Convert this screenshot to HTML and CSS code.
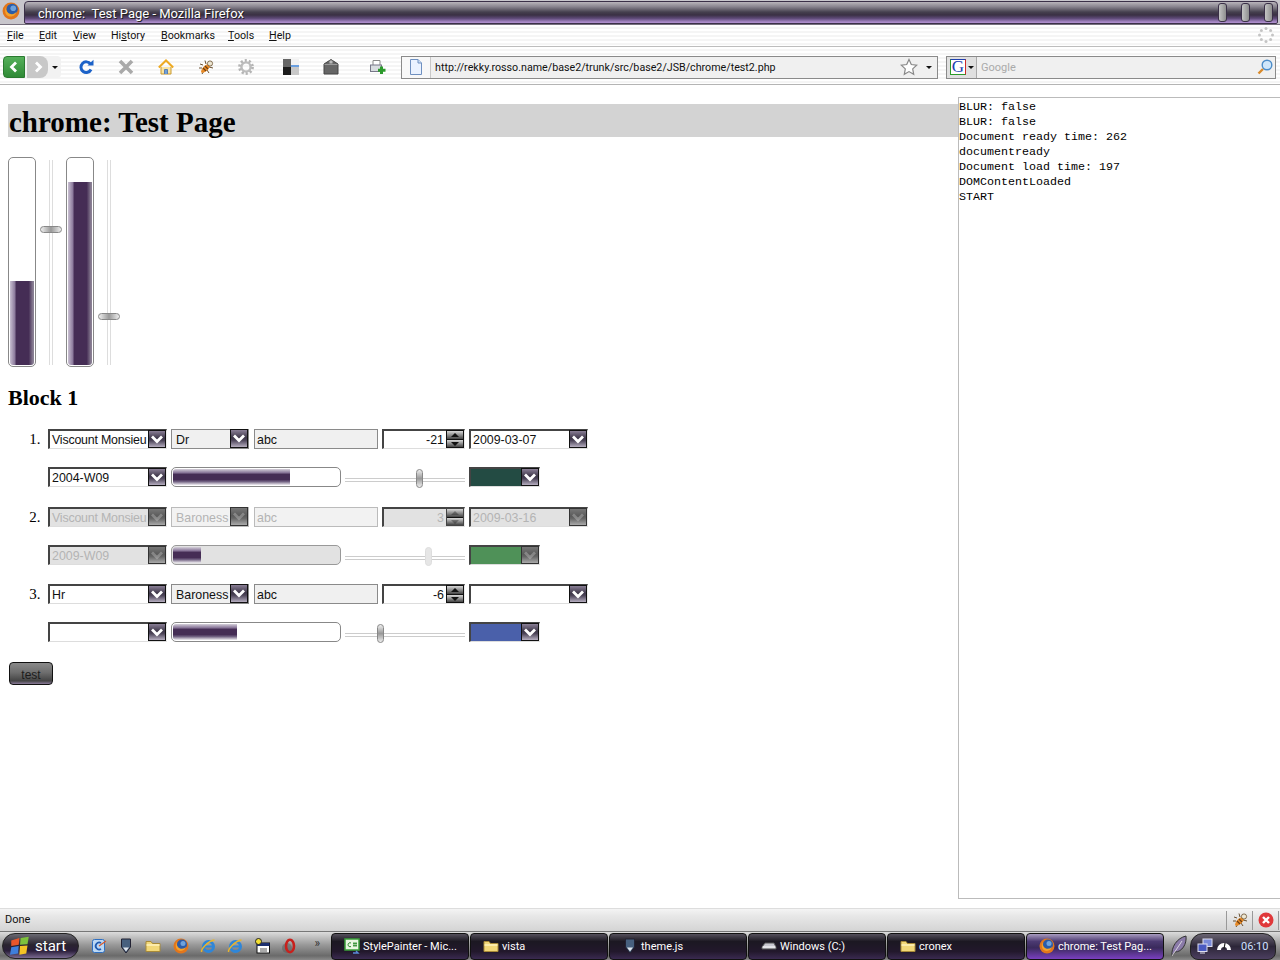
FILE: index.html
```html
<!DOCTYPE html>
<html>
<head>
	<meta charset="UTF-8">
	<title>chrome: Test Page - Mozilla Firefox</title>
	<link rel="stylesheet" href="styles.css">
</head>
<body>
	<svg class="sprite" xmlns="http://www.w3.org/2000/svg">
		<symbol id="i-fox" viewBox="0 0 16 16">
			<circle cx="8" cy="8" r="7.500" fill="#e2761c"/>
			<circle cx="9" cy="6.500" r="5" fill="#2b5ca8"/>
			<circle cx="10" cy="5.500" r="2.500" fill="#6ea2dc"/>
			<path d="M4 3.500C3 6 4 9.500 7 10.500c2.500.8 5-.2 6-2-.5 3-3.500 5-6.500 4.300C3 12 1.500 7.500 4 3.500z" fill="#f4a32c"/>
		</symbol>
		<symbol id="i-chev" viewBox="0 0 16 16">
			<path d="M3 5.500 8 10.500l5-5" fill="none" stroke="#fff" stroke-width="2.800"/>
		</symbol>
		<symbol id="i-reload" viewBox="0 0 16 16">
			<path d="M12.500 5A5.300 5.300 0 1 0 13 10.500" fill="none" stroke="#1c62c8" stroke-width="3"/>
			<path d="M9.500 6.500h6V.8z" fill="#1c62c8"/>
		</symbol>
		<symbol id="i-stop" viewBox="0 0 16 16">
			<path d="M2 2l12 12M14 2 2 14" stroke="#a9a9a9" stroke-width="3.600"/>
		</symbol>
		<symbol id="i-home" viewBox="0 0 16 16">
			<path d="M3 8v7h10V8" fill="#fbe3a0" stroke="#c99a30"/>
			<path d="M6.500 15v-4.500h3V15" fill="#6fa0d8" stroke="#5c7fb0"/>
			<path d="M.8 8.500 8 1.500l7.200 7" fill="none" stroke="#eeaa22" stroke-width="2"/>
		</symbol>
		<symbol id="i-bug" viewBox="0 0 16 16">
			<g stroke="#6a5030" stroke-width="1" fill="none">
				<path d="M5 6 2 5M4 9H1M6 12l-2 3M8 5 7 1.500M11 8l4 1M9 11l2 3"/>
			</g>
			<path d="M3 13.500c0-4 4-8 7.500-8.500l1.500 2c-1 3.500-5 7.500-9 6.500z" fill="#e88a26"/>
			<path d="M5 9l3 3M7 7l3 3" stroke="#6b3d12" stroke-width="1.200"/>
			<circle cx="12" cy="4.500" r="2.600" fill="#ece6d2" stroke="#6a5030" stroke-width=".8"/>
		</symbol>
		<symbol id="i-gear" viewBox="0 0 16 16">
			<circle cx="8" cy="8" r="6.300" fill="none" stroke="#b4b4b4" stroke-width="3.200" stroke-dasharray="2 1.960"/>
			<circle cx="8" cy="8" r="4.600" fill="none" stroke="#bcbcbc" stroke-width="2.400"/>
		</symbol>
		<symbol id="i-tile" viewBox="0 0 16 16">
			<rect width="16" height="16" fill="#f2f2f2"/>
			<rect width="8" height="8" fill="#666"/>
			<rect y="8" width="8" height="8" fill="#1c1c1c"/>
			<rect x="8" y="8" width="8" height="8" fill="#c8c8c8"/>
			<rect x="8" y="6" width="8" height="2" fill="#6a9fe0"/>
		</symbol>
		<symbol id="i-pack" viewBox="0 0 16 16">
			<path d="M1 5l7-4.500L15 5v10H1z" fill="#666" stroke="#444"/>
			<path d="M1.500 5.500h13" stroke="#999"/>
			<rect x="6.500" y="1.500" width="3" height="3" fill="#bbb"/>
		</symbol>
		<symbol id="i-add" viewBox="0 0 16 16">
			<path d="M3 6V1.500h7V6" fill="#fff" stroke="#888"/>
			<rect x=".5" y="6" width="11" height="6.500" fill="#d8dce0" stroke="#778"/>
			<path d="M11.500 7.500v7.500M8 11.300h7.500" stroke="#2c9a2c" stroke-width="3"/>
		</symbol>
		<symbol id="i-page" viewBox="0 0 16 16">
			<path d="M2.500.5h7.500l3.500 3.500v11.500h-11z" fill="#eaf2ff" stroke="#6f90c0"/>
			<path d="M10 .5V4h3.500" fill="#cfe0f8" stroke="#6f90c0"/>
		</symbol>
		<symbol id="i-star" viewBox="0 0 18 18">
			<path d="M9 1.500l2.300 5 5.400.7-4 3.700 1 5.400L9 13.600l-4.700 2.700 1-5.400-4-3.700 5.400-.7z" fill="#fff" stroke="#888" stroke-width="1.200"/>
		</symbol>
		<symbol id="i-glass" viewBox="0 0 16 16">
			<path d="M6 10 1.500 14.500" stroke="#d98a2a" stroke-width="2.400"/>
			<circle cx="10" cy="6" r="4.800" fill="#cfe6fa" stroke="#4c8cc8" stroke-width="1.400"/>
		</symbol>
		<symbol id="i-folder" viewBox="0 0 16 16">
			<path d="M1 13.500V3.500h5l1.500 2H15v8z" fill="#f2d878" stroke="#a88a38"/>
			<path d="M1.500 7h13" stroke="#fff3bc" stroke-width="1.500"/>
		</symbol>
		<symbol id="i-down" viewBox="0 0 16 16">
			<path d="M3.500 1h9v8L8 15 3.500 9z" fill="#47607e" stroke="#223"/>
			<path d="M5 9.500h6L8 13.500z" fill="#dfe6ee"/>
		</symbol>
		<symbol id="i-ie" viewBox="0 0 16 16">
			<circle cx="8.500" cy="8.500" r="5" fill="none" stroke="#2f86d8" stroke-width="3"/>
			<path d="M4 8.500h9" stroke="#2f86d8" stroke-width="2"/>
			<path d="M1.500 14C1 11 8 3 14.500 2" fill="none" stroke="#e8b52c" stroke-width="1.400"/>
		</symbol>
		<symbol id="i-edit" viewBox="0 0 16 16">
			<rect x="1.500" y="1.500" width="12" height="13" rx="2" fill="#bcd8f4" stroke="#2f6fc0"/>
			<path d="M10 5a3.500 3.500 0 1 0 0 6" fill="none" stroke="#1f5ab0" stroke-width="1.800"/>
			<path d="M8 8l7-5" stroke="#d85a2a" stroke-width="1.200"/>
		</symbol>
		<symbol id="i-app" viewBox="0 0 16 16">
			<rect x="3" y="5" width="12.500" height="10" fill="#fff" stroke="#111"/>
			<rect x="3" y="5" width="12.500" height="3" fill="#1c2f70"/>
			<path d="M6 11h7M6 13h7" stroke="#555"/>
			<circle cx="4.500" cy="3.500" r="3" fill="#f4e030" stroke="#222"/>
		</symbol>
		<symbol id="i-opera" viewBox="0 0 16 16">
			<circle cx="6" cy="10" r="5" fill="#555" opacity=".45"/>
			<ellipse cx="9" cy="8" rx="4" ry="6.200" fill="none" stroke="#c8201c" stroke-width="2.600"/>
		</symbol>
		<symbol id="i-cs" viewBox="0 0 16 16">
			<rect x="1" y="1" width="14" height="11" fill="#e8f6e0" stroke="#3aa03a" stroke-width="1.500"/>
			<path d="M7 5a2 2 0 1 0 0 3.500" fill="none" stroke="#2a8a2a"/>
			<path d="M10 4v5M12 4v5M9 5.500h4M9 7.500h4" stroke="#2a8a2a" stroke-width=".8"/>
			<path d="M9 15h5l-2-2" fill="none" stroke="#5a8ad8" stroke-width="1.400"/>
		</symbol>
		<symbol id="i-drive" viewBox="0 0 16 16">
			<path d="M1 9l3-4h9l2 4v2H1z" fill="#c8c8d0" stroke="#555"/>
			<path d="M1.500 9h13" stroke="#fff"/>
		</symbol>
		<symbol id="i-net" viewBox="0 0 16 16">
			<rect x="6" y="1" width="9" height="7.500" fill="#7a8ad8" stroke="#dde"/>
			<rect x="1" y="6" width="9" height="7.500" fill="#4a5ac0" stroke="#dde"/>
			<path d="M3 15h5" stroke="#dde"/>
		</symbol>
		<symbol id="i-dial" viewBox="0 0 16 12">
			<path d="M1 10a7 7 0 0 1 14 0h-4a3 3 0 0 0-6 0z" fill="#fff"/>
			<path d="M8 9 9 3" stroke="#222" stroke-width="1.200"/>
		</symbol>
		<symbol id="i-feather" viewBox="0 0 16 22">
			<path d="M1 21C0 12 6 3 15 1c1 8-4 16-11 16z" fill="#8a7aa8" stroke="#333"/>
			<path d="M1 21 11 6" stroke="#eee" stroke-width=".8"/>
		</symbol>
		<symbol id="i-xp" viewBox="0 0 16 16">
			<path d="M1 3.500 7.500 1.500 7 7 1 8z" fill="#e8562a"/>
			<path d="M8.500 1.500 15 .5l-1 6-6 .5z" fill="#7ec23c"/>
			<path d="M1 9l6-1-.5 6L0 15z" fill="#3f7fdc"/>
			<path d="M8 8l6-.5-1 6.500-5.500 1z" fill="#f4c425"/>
		</symbol>
		<symbol id="i-spin" viewBox="0 0 16 16">
			<g fill="#c4c4c4">
				<circle cx="8" cy="1.500" r="1.500"/><circle cx="12.600" cy="3.400" r="1.500"/><circle cx="14.500" cy="8" r="1.500"/><circle cx="12.600" cy="12.600" r="1.500"/><circle cx="8" cy="14.500" r="1.500"/><circle cx="3.400" cy="12.600" r="1.500"/><circle cx="1.500" cy="8" r="1.500"/><circle cx="3.400" cy="3.400" r="1.500"/>
			</g>
		</symbol>
	</svg>

	<div class="titlebar">
		<svg class="ico16 title-fox"><use href="#i-fox"/></svg>
		<div class="title-frame">
			<span class="title-text">chrome: &nbsp;Test Page - Mozilla Firefox</span>
			<span class="title-btns"><i></i><i></i><i></i></span>
		</div>
	</div>

	<div class="menubar">
		<span class="m-file"><u>F</u>ile</span>
		<span class="m-edit"><u>E</u>dit</span>
		<span class="m-view"><u>V</u>iew</span>
		<span class="m-hist">Hi<u>s</u>tory</span>
		<span class="m-book"><u>B</u>ookmarks</span>
		<span class="m-tools"><u>T</u>ools</span>
		<span class="m-help"><u>H</u>elp</span>
		<svg class="ico16 spinner"><use href="#i-spin"/></svg>
	</div>

	<div class="toolbar">
		<div class="backfwd">
			<span class="nav-back">
				<svg viewBox="0 0 12 12" width="12" height="12"><path d="M8 1.500 3.500 6 8 10.500" fill="none" stroke="#fff" stroke-width="2.800"/></svg>
			</span>
			<span class="nav-fwd">
				<svg viewBox="0 0 12 12" width="12" height="12"><path d="M4 1.500 8.500 6 4 10.500" fill="none" stroke="#fff" stroke-width="2.800"/></svg>
			</span>
			<span class="drop"></span>
		</div>
		<span class="tool"><svg class="ico16"><use href="#i-reload"/></svg></span>
		<span class="tool"><svg class="ico16"><use href="#i-stop"/></svg></span>
		<span class="tool"><svg class="ico16"><use href="#i-home"/></svg></span>
		<span class="tool t-bug"><svg class="ico16"><use href="#i-bug"/></svg></span>
		<span class="tool"><svg class="ico16"><use href="#i-gear"/></svg></span>
		<span class="tool t-tile"><svg class="ico16"><use href="#i-tile"/></svg></span>
		<span class="tool"><svg class="ico16"><use href="#i-pack"/></svg></span>
		<span class="tool t-add"><svg class="ico16"><use href="#i-add"/></svg></span>
		<div class="urlbar">
			<span class="url-page"><svg class="ico16"><use href="#i-page"/></svg></span>
			<span class="url-text">http://rekky.rosso.name/base2/trunk/src/base2/JSB/chrome/test2.php</span>
			<svg class="url-star"><use href="#i-star"/></svg>
			<span class="drop url-drop"></span>
		</div>
		<div class="searchbar">
			<span class="engine"><b class="g-box">G</b><span class="drop"></span></span>
			<span class="search-text">Google</span>
			<svg class="ico16 glass"><use href="#i-glass"/></svg>
		</div>
	</div>

	<div class="viewport">
		<div class="page">
			<h1>chrome: Test Page</h1>
			<div class="gauges">
				<div class="vprogress"><div class="vfill" style="height:41%"></div></div>
				<div class="vslider"><span class="vthumb" style="top:66px"></span></div>
				<div class="vprogress"><div class="vfill" style="height:89%"></div></div>
				<div class="vslider"><span class="vthumb" style="top:153px"></span></div>
			</div>
			<h2>Block 1</h2>
			<ol class="blocks">
				<li>
					<div class="controls">
						<div class="field combo wide"><span class="val tight">Viscount Monsieu</span><span class="arrow"><svg><use href="#i-chev"/></svg></span></div>
						<div class="field select small"><span class="val">Dr</span><span class="arrow"><svg><use href="#i-chev"/></svg></span></div>
						<div class="field text"><span class="val">abc</span></div>
						<div class="field number"><span class="val">-21</span><span class="spin"><i class="up"></i><i class="dn"></i></span></div>
						<div class="field combo wide"><span class="val">2009-03-07</span><span class="arrow"><svg><use href="#i-chev"/></svg></span></div>
						<div class="field combo wide"><span class="val">2004-W09</span><span class="arrow"><svg><use href="#i-chev"/></svg></span></div>
						<div class="hprogress"><div class="hfill" style="width:70.500%"></div></div>
						<div class="hslider"><span class="hthumb" style="left:71px"></span></div>
						<div class="field combo swatch"><span class="val" style="background:#234b43"></span><span class="arrow"><svg><use href="#i-chev"/></svg></span></div>
					</div>
				</li>
				<li class="off">
					<div class="controls">
						<div class="field combo wide"><span class="val tight">Viscount Monsieu</span><span class="arrow"><svg><use href="#i-chev"/></svg></span></div>
						<div class="field select small"><span class="val">Baroness</span><span class="arrow"><svg><use href="#i-chev"/></svg></span></div>
						<div class="field text"><span class="val">abc</span></div>
						<div class="field number"><span class="val">3</span><span class="spin"><i class="up"></i><i class="dn"></i></span></div>
						<div class="field combo wide"><span class="val">2009-03-16</span><span class="arrow"><svg><use href="#i-chev"/></svg></span></div>
						<div class="field combo wide"><span class="val">2009-W09</span><span class="arrow"><svg><use href="#i-chev"/></svg></span></div>
						<div class="hprogress"><div class="hfill" style="width:17%"></div></div>
						<div class="hslider"><span class="hthumb" style="left:80px"></span></div>
						<div class="field combo swatch"><span class="val" style="background:#4f9158"></span><span class="arrow"><svg><use href="#i-chev"/></svg></span></div>
					</div>
				</li>
				<li>
					<div class="controls">
						<div class="field combo wide"><span class="val">Hr</span><span class="arrow"><svg><use href="#i-chev"/></svg></span></div>
						<div class="field select small"><span class="val">Baroness</span><span class="arrow"><svg><use href="#i-chev"/></svg></span></div>
						<div class="field text"><span class="val">abc</span></div>
						<div class="field number"><span class="val">-6</span><span class="spin"><i class="up"></i><i class="dn"></i></span></div>
						<div class="field combo wide"><span class="val"></span><span class="arrow"><svg><use href="#i-chev"/></svg></span></div>
						<div class="field combo wide"><span class="val"></span><span class="arrow"><svg><use href="#i-chev"/></svg></span></div>
						<div class="hprogress"><div class="hfill" style="width:38.500%"></div></div>
						<div class="hslider"><span class="hthumb" style="left:32px"></span></div>
						<div class="field combo swatch"><span class="val" style="background:#4a60aa"></span><span class="arrow"><svg><use href="#i-chev"/></svg></span></div>
					</div>
				</li>
			</ol>
			<div class="test-btn">test</div>
		</div>
		<pre class="log">BLUR: false
BLUR: false
Document ready time: 262
documentready
Document load time: 197
DOMContentLoaded
START</pre>
	</div>

	<div class="statusbar">
		<span class="status-text">Done</span>
		<span class="status-cell"><svg class="ico16"><use href="#i-bug"/></svg></span>
		<span class="status-cell">
			<svg class="ico16" viewBox="0 0 16 16"><circle cx="8" cy="8" r="7.500" fill="#e0383a"/><path d="M5 5l6 6M11 5l-6 6" stroke="#fff" stroke-width="2.400"/></svg>
		</span>
	</div>

	<div class="taskbar">
		<div class="start"><svg class="ico16 start-flag"><use href="#i-xp"/></svg><span>start</span></div>
		<div class="quick">
			<svg class="ico16"><use href="#i-edit"/></svg>
			<svg class="ico16"><use href="#i-down"/></svg>
			<svg class="ico16"><use href="#i-folder"/></svg>
			<svg class="ico16"><use href="#i-fox"/></svg>
			<svg class="ico16"><use href="#i-ie"/></svg>
			<svg class="ico16"><use href="#i-ie"/></svg>
			<svg class="ico16"><use href="#i-app"/></svg>
			<svg class="ico16"><use href="#i-opera"/></svg>
			<span class="more">»</span>
		</div>
		<div class="tasks">
			<div class="task"><svg class="ico16"><use href="#i-cs"/></svg><span>StylePainter - Mic...</span></div>
			<div class="task"><svg class="ico16"><use href="#i-folder"/></svg><span>vista</span></div>
			<div class="task"><svg class="ico16"><use href="#i-down"/></svg><span>theme.js</span></div>
			<div class="task"><svg class="ico16"><use href="#i-drive"/></svg><span>Windows (C:)</span></div>
			<div class="task"><svg class="ico16"><use href="#i-folder"/></svg><span>cronex</span></div>
			<div class="task active"><svg class="ico16"><use href="#i-fox"/></svg><span>chrome: Test Pag...</span></div>
		</div>
		<svg class="feather"><use href="#i-feather"/></svg>
		<div class="tray">
			<svg class="ico16"><use href="#i-net"/></svg>
			<svg class="ico16 dial"><use href="#i-dial"/></svg>
			<span class="clock">06:10</span>
		</div>
	</div>
</body>
</html>
```
FILE: styles.css
```css
html, body {
	margin: 0;
	height: 960px;
	overflow: hidden;
	background: #fff;
}
body {
	display: flex;
	flex-direction: column;
	font-family: Roboto, sans-serif;
	font-size: 11px;
	color: #111;
}
.sprite {
	display: none;
}
.ico16 {
	width: 16px;
	height: 16px;
	flex: none;
}

/* window title */
.titlebar {
	height: 25px;
	flex: none;
	display: flex;
	align-items: center;
	background: #c8c6cc;
	border-bottom: 1px solid #77707e;
	box-sizing: border-box;
}
.title-fox {
	width: 18px;
	height: 18px;
	margin: 0 4px 2px 2px;
}
.title-frame {
	flex: 1;
	height: 23px;
	margin-right: 2px;
	box-sizing: border-box;
	display: flex;
	align-items: center;
	border: 1px solid #3b3048;
	border-radius: 4px 4px 2px 2px;
	background: linear-gradient(#b9b5bb 0, #8a8590 22%, #45404e 48%, #3a3044 62%, #5e4a78 78%, #ac8ccb 96%);
}
.title-text {
	margin: 2px 0 0 13px;
	flex: 1;
	color: #fff;
	font-size: 13px;
	text-shadow: 1px 1px 0 #222;
}
.title-btns {
	display: flex;
	gap: 14px;
	margin-right: 4px;
}
.title-btns i {
	width: 7px;
	height: 17px;
	border: 1px solid #3b3048;
	border-radius: 3px;
	background: linear-gradient(90deg, #c4c4c4, #8e8e8e);
}

/* menu */
.menubar {
	height: 22px;
	flex: none;
	box-sizing: border-box;
	position: relative;
	display: flex;
	align-items: center;
	padding: 0 0 1px 7px;
	border-bottom: 1px solid #bdbdbd;
	font-size: 10.700px;
	background: repeating-linear-gradient(#fff 0 2px, #f5f5f5 2px 4px);
}
.menubar span {
	flex: none;
}
.m-file { width: 32px; }
.m-edit { width: 34px; }
.m-view { width: 38px; }
.m-hist { width: 50px; }
.m-book { width: 67px; }
.m-tools { width: 41px; }
.spinner {
	margin-left: auto;
	margin-right: 6px;
}

/* navigation toolbar */
.toolbar {
	height: 38px;
	flex: none;
	box-sizing: border-box;
	display: flex;
	align-items: center;
	padding: 3px 4px 0 3px;
	border-bottom: 1px solid #b4b4b4;
	background: repeating-linear-gradient(#fff 0 2px, #f5f5f5 2px 4px);
}
.backfwd {
	width: 58px;
	height: 22px;
	flex: none;
	display: flex;
	align-items: center;
	margin-right: 5px;
	border-radius: 4px;
	background: #f2f2f2;
}
.nav-back, .nav-fwd {
	height: 22px;
	display: flex;
	align-items: center;
	justify-content: center;
}
.nav-back {
	width: 22px;
	border-radius: 4px 0 0 4px;
	background: linear-gradient(#55b05a, #2f8a36);
	border: 1px solid #2a7a30;
	box-sizing: border-box;
	margin-right: 2px;
}
.nav-fwd {
	width: 21px;
	border-radius: 0 8px 8px 0;
	background: #c8c8c8;
	margin-right: 4px;
}
.drop {
	display: inline-block;
	width: 0;
	height: 0;
	border: 3px solid transparent;
	border-top: 3px solid #111;
	border-bottom: 0;
	flex: none;
}
.tool {
	width: 40px;
	height: 22px;
	flex: none;
	display: flex;
	align-items: center;
	justify-content: center;
}
.t-bug svg {
	margin-left: -1px;
}
.t-tile {
	width: 46px;
	margin: 0 -3px 0 2px;
}
.t-add {
	width: 46px;
	margin: 0 -3px 0 4px;
}
.urlbar, .searchbar {
	height: 23px;
	box-sizing: border-box;
	display: flex;
	align-items: center;
	border: 1px solid #8a8a8a;
	background: #f0f0f0;
	flex: none;
}
.urlbar {
	width: 537px;
	margin-left: 3px;
	margin-right: 8px;
	font-size: 10.700px;
}
.url-page {
	width: 28px;
	height: 21px;
	flex: none;
	display: flex;
	align-items: center;
	justify-content: center;
	border-right: 1px solid #c8c8c8;
	background: #f8f8f8;
	margin-right: 4px;
}
.url-text {
	flex: 1;
}
.url-star {
	width: 18px;
	height: 18px;
	margin-right: 8px;
}
.url-drop {
	margin-right: 5px;
}
.searchbar {
	width: 330px;
}
.engine {
	width: 30px;
	height: 21px;
	flex: none;
	box-sizing: border-box;
	display: flex;
	align-items: center;
	padding-left: 3px;
	gap: 2px;
	background: #e0e0e0;
	border-right: 1px solid #aaa;
}
.g-box {
	width: 16px;
	height: 16px;
	box-sizing: border-box;
	border: 1px solid #2a9a2a;
	border-top-color: #2040b0;
	border-right-color: #cc2a2a;
	background: #fff;
	color: #2040b0;
	font: 17px/14px "Liberation Serif", serif;
	text-align: center;
}
.search-text {
	flex: 1;
	margin-left: 4px;
	color: #aaa;
}
.glass {
	margin-right: 2px;
}

/* page */
.viewport {
	flex: 1;
	display: flex;
	min-height: 0;
}
.page {
	width: 950px;
	flex: none;
	padding: 19px 0 0 8px;
	color: #000;
	font-family: "Liberation Serif", serif;
}
h1 {
	margin: 0;
	height: 33px;
	padding-left: 1px;
	font-size: 29px;
	line-height: 37px;
	background: #d3d3d3;
}
.gauges {
	display: flex;
	margin-top: 20px;
	height: 210px;
}
.vprogress {
	width: 28px;
	box-sizing: border-box;
	border: 1px solid #888;
	border-radius: 5px;
	padding: 1px 1px;
	display: flex;
	align-items: flex-end;
}
.vfill {
	width: 100%;
	background: linear-gradient(90deg, #c9c0d2 0, #8c7a9c 20%, #452d55 26%, #452d55 78%, #8a8094 96%);
	border-radius: 0 0 3px 3px;
}
.vslider {
	width: 30px;
	position: relative;
	margin: 3px 0 2px;
}
.vslider::before {
	content: "";
	position: absolute;
	left: 13px;
	top: 0;
	bottom: 0;
	width: 2px;
	border-left: 1px solid #ddd;
	border-right: 1px solid #ddd;
}
.vthumb {
	position: absolute;
	left: 4px;
	width: 20px;
	height: 5px;
	border: 1px solid #888;
	border-radius: 4px;
	background: linear-gradient(90deg, #eee, #999 50%, #eee);
}
h2 {
	margin: 17px 0 0;
	height: 28px;
	font-size: 22px;
	line-height: 27px;
}
.blocks {
	margin: 17px 0 0;
	padding: 0 0 0 40px;
	font-size: 15px;
}
.blocks li {
	margin-bottom: 20px;
}
.blocks li::marker {
	content: counter(list-item) ".  ";
}
.blocks li:nth-child(2) {
	margin-bottom: 19px;
}
.controls {
	width: 542px;
	display: flex;
	flex-wrap: wrap;
	column-gap: 4px;
	row-gap: 18px;
	font-family: "Liberation Sans", sans-serif;
	font-size: 12.400px;
}
.field {
	height: 20px;
	box-sizing: border-box;
	display: flex;
	align-items: stretch;
	line-height: 18px;
	color: #111;
	background: #fff;
}
.combo, .number {
	border-top: 2px solid #444;
	border-left: 2px solid #444;
	border-bottom: 1px solid #ddd;
	border-right: 1px solid #eee;
}
.select, .text {
	border: 1px solid #8a8a8a;
	line-height: 20px;
	background: #f0f0f0;
}
.wide { width: 119px; }
.small { width: 78px; margin-right: 1px; }
.text { width: 124px; }
.number { width: 83px; }
.swatch { width: 71px; }
.val {
	flex: 1;
	min-width: 0;
	overflow: hidden;
	white-space: nowrap;
	padding-left: 2px;
}
.tight {
	letter-spacing: -.2px;
}
.select .val {
	padding-left: 4px;
}
.number .val {
	text-align: right;
	padding-right: 2px;
}
.swatch .val {
	padding: 0;
}
.arrow {
	width: 18px;
	flex: none;
	box-sizing: border-box;
	margin: -1px 0 0;
	border: 1px solid #111;
	background: linear-gradient(#8a7f96 0, #3d3648 45%, #4c4458 60%, #b6aec0 100%);
}
.arrow svg {
	display: block;
	width: 16px;
	height: 16px;
}
.spin {
	width: 18px;
	flex: none;
	margin-top: -1px;
	box-sizing: border-box;
	display: flex;
	flex-direction: column;
	gap: 1px;
	border: 1px solid #111;
	background: #111;
}
.spin i {
	flex: 1;
	position: relative;
	background: linear-gradient(#d8d8d8, #444);
}
.spin i::after {
	content: "";
	position: absolute;
	left: 4px;
	top: 2px;
	border: 4px solid transparent;
}
.spin .up::after {
	border-bottom-color: #111;
	border-top: 0;
}
.spin .dn::after {
	border-top-color: #111;
	border-bottom: 0;
}
.hprogress {
	width: 170px;
	height: 20px;
	box-sizing: border-box;
	border: 1px solid #888;
	border-radius: 5px;
	padding: 1px;
	background: #fff;
}
.hfill {
	height: 16px;
	border-radius: 3px 0 0 3px;
	background: linear-gradient(#d5d0da 0, #8c7a9c 22%, #452d55 34%, #452d55 66%, #6f5f80 78%, #f0eef2 100%);
}
.hslider {
	width: 120px;
	margin-right: 0;
	position: relative;
}
.hslider::before {
	content: "";
	position: absolute;
	left: 0;
	right: 0;
	top: 11px;
	height: 2px;
	border-top: 1px solid #ccc;
	border-bottom: 1px solid #ccc;
}
.hthumb {
	position: absolute;
	top: 2px;
	width: 5px;
	height: 17px;
	border: 1px solid #888;
	border-radius: 4px;
	background: linear-gradient(#eee, #999 50%, #eee);
}
.off .field {
	color: #b4b4b4;
}
.off .combo, .off .number {
	background: #e2e2e2;
}
.off .select, .off .text {
	border-color: #bbb;
	background: #f2f2f2;
}
.off .arrow {
	background: linear-gradient(#777, #5a5a5a 45%, #666 60%, #aaa);
	border-color: #333;
}
.off .arrow svg {
	opacity: .25;
}
.off .spin {
	border-color: #444;
}
.off .spin i::after {
	opacity: .35;
}
.off .hprogress {
	background: #e2e2e2;
	border-color: #999;
}
.off .hthumb {
	border-color: #ddd;
	background: #e6e6e6;
}
.test-btn {
	width: 44px;
	height: 23px;
	box-sizing: border-box;
	margin: 1px 0 0 1px;
	border: 1px solid #111;
	border-radius: 4px;
	text-align: center;
	font: 12px/24px "Liberation Sans", sans-serif;
	color: #1c1c1c;
	background: linear-gradient(#8a8a8a 0, #6e6e6e 45%, #444 85%, #8a7a9a 100%);
}
.log {
	margin: 12px 0 9px;
	flex: 1;
	padding: 2px 0 0;
	box-sizing: border-box;
	border: 1px solid #bbb;
	border-right: 0;
	color: #000;
	font-family: "Liberation Mono", monospace;
	font-size: 11.670px;
	line-height: 15px;
}

/* status bar */
.statusbar {
	height: 23px;
	flex: none;
	box-sizing: border-box;
	display: flex;
	align-items: center;
	padding: 0 1px 0 5px;
	border-top: 1px solid #ddd;
	background: linear-gradient(#f4f4f4, #e8e8e8 30%, #d4d4d4);
}
.status-text {
	flex: 1;
	margin-bottom: 1px;
}
.status-cell {
	width: 25px;
	height: 19px;
	display: flex;
	align-items: center;
	justify-content: center;
	border-left: 1px solid #999;
}
.status-cell:last-child {
	border-right: 1px solid #999;
}

/* taskbar */
.taskbar {
	height: 29px;
	flex: none;
	display: flex;
	align-items: center;
	color: #fff;
	border-top: 1px solid #777;
	box-sizing: border-box;
	background: linear-gradient(#dcdcdc, #9a9a9a 45%, #6a6a6a 85%, #8a8a8a);
}
.start {
	width: 77px;
	height: 26px;
	flex: none;
	margin-left: 2px;
	box-sizing: border-box;
	display: flex;
	align-items: center;
	gap: 5px;
	padding-left: 7px;
	border: 1px solid #222;
	border-radius: 13px;
	background: linear-gradient(#6a6a72, #2a2430 45%, #2a1e3a 70%, #7a6a90);
	font-size: 15px;
}
.start-flag {
	width: 20px;
	height: 20px;
}
.quick {
	width: 252px;
	flex: none;
	display: flex;
	align-items: center;
	padding-left: 12px;
	box-sizing: border-box;
	gap: 11.200px;
}
.more {
	color: #333;
	font-size: 12px;
	margin: -6px 0 0 6px;
}
.tasks {
	display: flex;
	flex: none;
	gap: 1px;
}
.task {
	width: 138px;
	height: 27px;
	box-sizing: border-box;
	display: flex;
	align-items: center;
	gap: 3px;
	padding: 0 0 0 12px;
	border: 1px solid #111;
	border-radius: 4px;
	background: linear-gradient(#55505c, #1c1822 30%, #22182c 70%, #3a2a50);
	white-space: nowrap;
}
.task.active {
	background: linear-gradient(#a99cc0, #4c3a72 30%, #3a2a5c 55%, #7a40c0);
}
.feather {
	width: 16px;
	height: 22px;
	margin-left: 7px;
	flex: none;
}
.tray {
	width: 86px;
	height: 27px;
	flex: none;
	box-sizing: border-box;
	margin-left: 3px;
	display: flex;
	align-items: center;
	padding-left: 6px;
	border: 1px solid #222;
	border-radius: 13px 13px 8px 8px;
	background: linear-gradient(#6a6472, #2c2638 50%, #4c3f60);
}
.dial {
	margin-left: 3px;
	height: 12px;
}
.clock {
	margin-left: 9px;
	color: #cfe0ff;
}
```
